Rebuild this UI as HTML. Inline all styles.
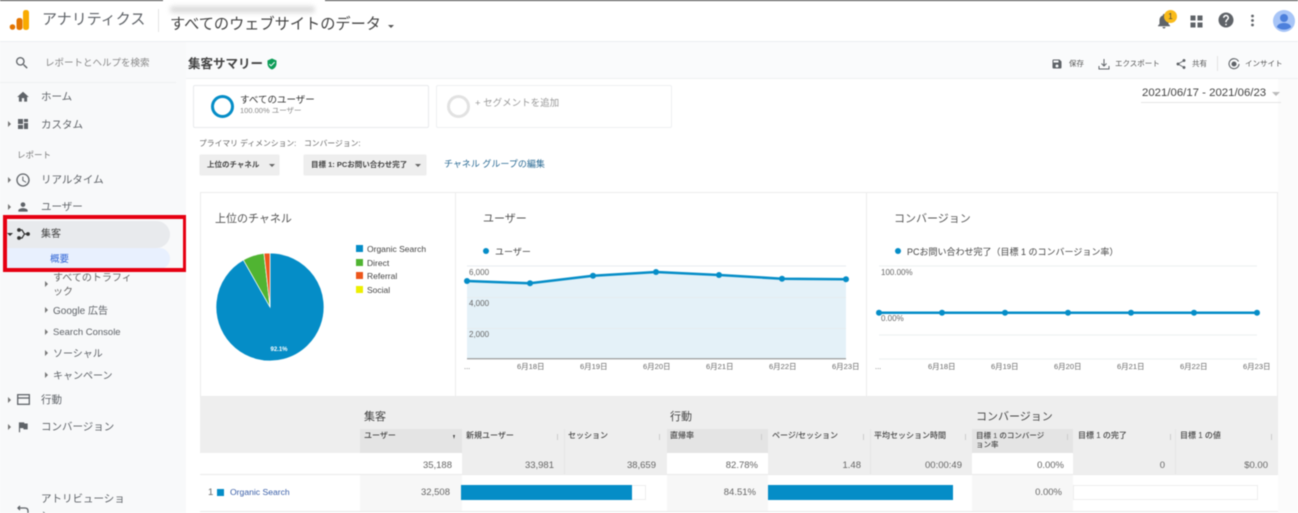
<!DOCTYPE html>
<html lang="ja"><head><meta charset="utf-8"><title>アナリティクス</title>
<style>
html,body{margin:0;padding:0;width:1298px;height:513px;overflow:hidden;background:#fff}
body{position:relative;font-family:"Liberation Sans","Noto Sans CJK JP",sans-serif;color:#555;filter:blur(.4px)}
.a,.t,svg.i{position:absolute}
.t{white-space:nowrap;line-height:1.2}
.r{text-align:right}
.h{font-size:8px;color:#444;font-weight:500}
.n{font-size:9.5px;color:#666}
.x{font-size:7.5px;color:#666}
.s{font-size:10.5px;color:#5f6368}
.tri{position:absolute;width:0;height:0;border-left:3px solid #777;border-top:3px solid transparent;border-bottom:3px solid transparent}
.dn{position:absolute;width:0;height:0;border-top:3px solid #666;border-left:3px solid transparent;border-right:3px solid transparent}
</style></head><body>
<!-- top line -->
<div class="a" style="left:0;top:0;width:163px;height:1px;background:#444"></div>
<div class="a" style="left:325px;top:0;width:973px;height:1px;background:#444"></div>
<div class="a" style="left:170px;top:6px;width:145px;height:7px;background:#ddd;border-radius:3px;filter:blur(2.5px)"></div>
<!-- header -->
<div class="a" style="left:0;top:41px;width:1298px;height:1px;background:#eceef0"></div>
<svg class="i" style="left:9px;top:9px" width="21" height="23" viewBox="0 0 21 23"><rect x="14" y="1" width="6" height="20" rx="2.5" fill="#f9ab00"/><rect x="7.5" y="9" width="6" height="12" rx="2.5" fill="#e37400"/><circle cx="3.5" cy="18" r="2.8" fill="#e37400"/></svg>
<div class="t" style="left:42px;top:11px;font-size:15px;color:#5f6368">アナリティクス</div>
<div class="a" style="left:158px;top:9px;width:1px;height:23px;background:#e3e3e3"></div>
<div class="t" style="left:170px;top:16px;font-size:15.2px;color:#444">すべてのウェブサイトのデータ</div>
<div class="dn" style="left:388px;top:25px;border-top-color:#555"></div>
<svg class="i" style="left:1155px;top:12px" width="18" height="18" viewBox="0 0 24 24" fill="#5f6368"><path d="M12 22c1.1 0 2-.9 2-2h-4c0 1.1.89 2 2 2zm6-6v-5c0-3.07-1.64-5.64-4.5-6.32V4c0-.83-.67-1.5-1.5-1.5s-1.5.67-1.5 1.5v.68C7.63 5.36 6 7.92 6 11v5l-2 2v1h16v-1l-2-2z"/></svg>
<div class="a" style="left:1164px;top:10px;width:13px;height:13px;border-radius:50%;background:#f9bb1a;color:#444;font-size:8px;text-align:center;line-height:13px">1</div>
<svg class="i" style="left:1190px;top:15px" width="13" height="13" viewBox="0 0 13 13" fill="#5f6368"><rect x="0.5" y="0.5" width="5" height="5"/><rect x="7.5" y="0.5" width="5" height="5"/><rect x="0.5" y="7.5" width="5" height="5"/><rect x="7.5" y="7.5" width="5" height="5"/></svg>
<svg class="i" style="left:1217px;top:11px" width="18" height="18" viewBox="0 0 24 24" fill="#5f6368"><path d="M12 2C6.48 2 2 6.48 2 12s4.48 10 10 10 10-4.48 10-10S17.52 2 12 2zm1 17h-2v-2h2v2zm2.07-7.75l-.9.92C13.45 12.9 13 13.5 13 15h-2v-.5c0-1.1.45-2.1 1.17-2.83l1.24-1.26c.37-.36.59-.86.59-1.41 0-1.1-.9-2-2-2s-2 .9-2 2H8c0-2.21 1.79-4 4-4s4 1.79 4 4c0 .88-.36 1.68-.93 2.25z"/></svg>
<svg class="i" style="left:1250px;top:14px" width="5" height="13" viewBox="0 0 5 13" fill="#5f6368"><circle cx="2.5" cy="2" r="1.4"/><circle cx="2.5" cy="6.5" r="1.4"/><circle cx="2.5" cy="11" r="1.4"/></svg>
<svg class="i" style="left:1273px;top:10px" width="22" height="22" viewBox="0 0 22 22"><circle cx="11" cy="11" r="11" fill="#a8c5f7"/><circle cx="11" cy="8" r="4" fill="#4d80dc"/><path d="M3.8 17c1-3 4-4 7.2-4s6.2 1 7.2 4a11 11 0 0 1-14.4 0z" fill="#4d80dc"/></svg>

<!-- sidebar -->
<div class="a" style="left:0;top:42px;width:186px;height:471px;background:#f8f9fa"></div>
<div class="a" style="left:0;top:82px;width:176px;height:1px;background:#eef0f1"></div>
<svg class="i" style="left:14px;top:55px" width="16" height="16" viewBox="0 0 24 24" fill="#5f6368"><path d="M15.5 14h-.79l-.28-.27A6.471 6.471 0 0 0 16 9.5 6.5 6.5 0 1 0 9.5 16c1.61 0 3.09-.59 4.23-1.57l.27.28v.79l5 4.99L20.49 19l-4.99-5zm-6 0C7.01 14 5 11.99 5 9.5S7.01 5 9.5 5 14 7.01 14 9.5 11.99 14 9.5 14z"/></svg>
<div class="t" style="left:45px;top:58px;font-size:9.5px;color:#888">レポートとヘルプを検索</div>
<svg class="i" style="left:16px;top:90px" width="14" height="14" viewBox="0 0 24 24" fill="#5f6368"><path d="M10 20v-6h4v6h5v-8h3L12 3 2 12h3v8z"/></svg>
<div class="t s" style="left:41px;top:91px">ホーム</div>
<div class="tri" style="left:8px;top:121px"></div>
<svg class="i" style="left:17px;top:118px" width="12" height="12" viewBox="0 0 12 12" fill="#5f6368"><rect x="1" y="1" width="5" height="5"/><rect x="7" y="1" width="4" height="3"/><rect x="1" y="7" width="5" height="4"/><rect x="7" y="5" width="4" height="6"/></svg>
<div class="t s" style="left:41px;top:119px">カスタム</div>
<div class="t" style="left:17px;top:150px;font-size:8.5px;color:#777">レポート</div>
<div class="tri" style="left:8px;top:177px"></div>
<svg class="i" style="left:15px;top:172px" width="16" height="16" viewBox="0 0 24 24" fill="#5f6368"><path d="M11.99 2C6.47 2 2 6.48 2 12s4.47 10 9.99 10C17.52 22 22 17.52 22 12S17.52 2 11.99 2zM12 20c-4.42 0-8-3.58-8-8s3.58-8 8-8 8 3.58 8 8-3.58 8-8 8zm.5-13H11v6l5.25 3.15.75-1.23-4.5-2.67z"/></svg>
<div class="t s" style="left:41px;top:174px">リアルタイム</div>
<div class="tri" style="left:8px;top:204px"></div>
<svg class="i" style="left:16px;top:200px" width="14" height="14" viewBox="0 0 24 24" fill="#5f6368"><path d="M12 12c2.21 0 4-1.79 4-4s-1.79-4-4-4-4 1.79-4 4 1.79 4 4 4zm0 2c-2.67 0-8 1.34-8 4v2h16v-2c0-2.66-5.33-4-8-4z"/></svg>
<div class="t s" style="left:41px;top:201px">ユーザー</div>

<div class="a" style="left:4px;top:221px;width:166px;height:27px;background:#e8eaed;border-radius:0 14px 14px 0"></div>
<div class="a" style="left:4px;top:248px;width:166px;height:21px;background:#e8f0fe;border-radius:0 11px 11px 0"></div>
<div class="dn" style="left:7px;top:233px;border-top-color:#333"></div>
<svg class="i" style="left:17px;top:228px" width="13" height="12" viewBox="0 0 13 12" fill="none" stroke="#333" stroke-width="1.2"><path d="M2 2h3l2.5 4L5 10H2M7.5 6H11"/><circle cx="2" cy="2" r="1.3" fill="#333"/><circle cx="2" cy="10" r="1.3" fill="#333"/><circle cx="11" cy="6" r="1.3" fill="#333"/></svg>
<div class="t" style="left:41px;top:229px;font-size:10px;color:#444">集客</div>
<div class="t" style="left:50px;top:254px;font-size:9.5px;color:#3367d6">概要</div>
<div class="a" style="left:3px;top:215px;width:176px;height:49px;border:4px solid #e60012"></div>

<div class="tri" style="left:45px;top:281px"></div>
<div class="t" style="left:53px;top:272px;font-size:10px;color:#666;line-height:14px;white-space:normal;width:82px;height:26px">すべてのトラフィック</div>
<div class="tri" style="left:45px;top:307px"></div>
<div class="t" style="left:53px;top:306px;font-size:10px;color:#5f6368">Google 広告</div>
<div class="tri" style="left:45px;top:329px"></div>
<div class="t" style="left:53px;top:327px;font-size:9.5px;color:#5f6368">Search Console</div>
<div class="tri" style="left:45px;top:350px"></div>
<div class="t" style="left:53px;top:349px;font-size:10px;color:#5f6368">ソーシャル</div>
<div class="tri" style="left:45px;top:372px"></div>
<div class="t" style="left:53px;top:371px;font-size:10px;color:#5f6368">キャンペーン</div>
<div class="tri" style="left:8px;top:397px"></div>
<svg class="i" style="left:17px;top:394px" width="13" height="11" viewBox="0 0 13 11" fill="none" stroke="#5f6368" stroke-width="1.3"><rect x=".7" y=".7" width="11.6" height="9.6"/><path d="M.7 4h11.6"/></svg>
<div class="t s" style="left:41px;top:394px">行動</div>
<div class="tri" style="left:8px;top:424px"></div>
<svg class="i" style="left:16px;top:420px" width="14" height="14" viewBox="0 0 24 24" fill="#5f6368"><path d="M14.4 6L14 4H5v17h2v-7h5.6l.4 2h7V6z"/></svg>
<div class="t s" style="left:41px;top:421px">コンバージョン</div>
<div class="t s" style="left:41px;top:491px;width:86px;white-space:normal;line-height:17px;height:22px;overflow:hidden">アトリビューション</div>
<svg class="i" style="left:17px;top:505px" width="12" height="8" viewBox="0 0 12 8" fill="none" stroke="#5f6368" stroke-width="1.3"><path d="M1 3h7c2 0 3 1 3 3v2M3 1L1 3l2 2"/></svg>

<!-- title bar -->
<div class="a" style="left:186px;top:42px;width:1112px;height:36px;background:#fafbfc"></div>
<div class="a" style="left:186px;top:78px;width:1112px;height:1px;background:#eef0f2"></div>
<div class="a" style="left:186px;top:79px;width:1112px;height:434px;background:#fff"></div>
<div class="a" style="left:1278px;top:79px;width:20px;height:434px;background:#fbfbfb"></div>
<div class="t" style="left:188px;top:57px;font-size:12.5px;font-weight:700;color:#444">集客サマリー</div>
<svg class="i" style="left:266px;top:58px" width="12" height="12" viewBox="0 0 24 24" fill="#0d9d58"><path d="M12 1L3 5v6c0 5.55 3.84 10.74 9 12 5.16-1.26 9-6.45 9-12V5l-9-4zm-2 16l-4-4 1.41-1.41L10 14.17l6.59-6.59L18 9l-8 8z"/></svg>
<svg class="i" style="left:1051px;top:58px" width="12" height="12" viewBox="0 0 24 24" fill="#5f6368"><path d="M17 3H5c-1.11 0-2 .9-2 2v14c0 1.1.89 2 2 2h14c1.1 0 2-.9 2-2V7l-4-4zm-5 16c-1.66 0-3-1.34-3-3s1.34-3 3-3 3 1.34 3 3-1.34 3-3 3zm3-10H5V5h10v4z"/></svg>
<div class="t" style="left:1069px;top:59px;font-size:7.5px;color:#555">保存</div>
<svg class="i" style="left:1098px;top:58px" width="12" height="12" viewBox="0 0 12 12" fill="none" stroke="#5f6368"><path d="M6 1v7M3.5 5.5L6 8l2.5-2.5M1 8v3h10V8"/></svg>
<div class="t" style="left:1115px;top:59px;font-size:7.5px;color:#555">エクスポート</div>
<svg class="i" style="left:1175px;top:58px" width="12" height="12" viewBox="0 0 24 24" fill="#5f6368"><path d="M18 16.08c-.76 0-1.44.3-1.96.77L8.91 12.7c.05-.23.09-.46.09-.7s-.04-.47-.09-.7l7.05-4.11c.54.5 1.25.81 2.04.81 1.66 0 3-1.34 3-3s-1.34-3-3-3-3 1.34-3 3c0 .24.04.47.09.7L8.04 9.81C7.5 9.31 6.79 9 6 9c-1.66 0-3 1.34-3 3s1.34 3 3 3c.79 0 1.5-.31 2.04-.81l7.12 4.16c-.05.21-.08.43-.08.65 0 1.61 1.31 2.92 2.92 2.92 1.61 0 2.92-1.31 2.92-2.92s-1.31-2.92-2.92-2.92z"/></svg>
<div class="t" style="left:1192px;top:59px;font-size:7.5px;color:#555">共有</div>
<div class="a" style="left:1217px;top:56px;width:1px;height:15px;background:#e3e3e3"></div>
<svg class="i" style="left:1228px;top:58px" width="12" height="12" viewBox="0 0 12 12" fill="none" stroke="#5f6368" stroke-width="1.1"><path d="M10.5 3.5A5 5 0 1 0 11 6"/><circle cx="6" cy="6" r="2" fill="#5f6368"/></svg>
<div class="t" style="left:1245px;top:59px;font-size:7.5px;color:#555">インサイト</div>

<!-- date -->
<div class="t" style="left:1142px;top:87px;font-size:11.4px;color:#444">2021/06/17 - 2021/06/23</div>
<div class="dn" style="left:1272px;top:92px;border-top:4px solid #bbb;border-left-width:4px;border-right-width:4px"></div>
<div class="a" style="left:1141px;top:102px;width:140px;height:1px;background:#e5e5e5"></div>

<!-- segments -->
<div class="a" style="left:193px;top:85px;width:234px;height:41px;border:1px solid #e8eaed;border-radius:2px;background:#fff"></div>
<div class="a" style="left:211px;top:95px;width:23px;height:23px;box-sizing:border-box;border:3.5px solid #058dc7;border-radius:50%"></div>
<div class="t" style="left:240px;top:95px;font-size:9.5px;color:#333">すべてのユーザー</div>
<div class="t" style="left:240px;top:106px;font-size:7.5px;color:#888">100.00% ユーザー</div>
<div class="a" style="left:436px;top:85px;width:234px;height:41px;border:1px solid #eeeff1;border-radius:2px;background:#fff"></div>
<div class="a" style="left:447px;top:95px;width:23px;height:23px;box-sizing:border-box;border:3px solid #e2e2e2;border-radius:50%"></div>
<div class="t" style="left:475px;top:98px;font-size:9.5px;color:#999">+ セグメントを追加</div>

<!-- dims -->
<div class="t" style="left:199px;top:139px;font-size:7.8px;color:#666">プライマリ ディメンション:</div>
<div class="t" style="left:304px;top:139px;font-size:7.8px;color:#666">コンバージョン:</div>
<div class="a" style="left:200px;top:155px;width:79px;height:20px;background:#eee;box-shadow:0 0 1px #ccc"></div>
<div class="t" style="left:207px;top:160px;font-size:7.5px;font-weight:700;color:#444">上位のチャネル</div>
<div class="dn" style="left:269px;top:164px"></div>
<div class="a" style="left:304px;top:155px;width:122px;height:20px;background:#eee;box-shadow:0 0 1px #ccc"></div>
<div class="t" style="left:311px;top:160px;font-size:7.5px;font-weight:700;color:#444">目標 1: PCお問い合わせ完了</div>
<div class="dn" style="left:415px;top:164px"></div>
<div class="t" style="left:444px;top:159px;font-size:9px;color:#2a6a94">チャネル グループの編集</div>

<!-- chart panel -->
<div class="a" style="left:200px;top:192px;width:1078px;height:205px;box-sizing:border-box;border:1px solid #ececec;background:#fff"></div>
<div class="a" style="left:455px;top:192px;width:1px;height:205px;background:#ececec"></div>
<div class="a" style="left:866px;top:192px;width:1px;height:205px;background:#ececec"></div>
<div class="t" style="left:215px;top:213px;font-size:11px;color:#555">上位のチャネル</div>
<div class="t" style="left:483px;top:213px;font-size:11px;color:#555">ユーザー</div>
<div class="t" style="left:894px;top:213px;font-size:11px;color:#555">コンバージョン</div>

<svg class="a" style="left:210px;top:245px" width="125" height="125" viewBox="210 245 125 125">
<path d="M270 307V253A54 54 0 1 1 243.4 260Z" fill="#058dc7" stroke="#fff" stroke-width=".7"/>
<path d="M270 307L243.4 260A54 54 0 0 1 264 253.3Z" fill="#50b432" stroke="#fff" stroke-width=".7"/>
<path d="M270 307L264 253.3A54 54 0 0 1 270 253Z" fill="#ed561b" stroke="#fff" stroke-width=".7"/>
<text x="279" y="351" font-size="6" font-weight="700" fill="#fff" text-anchor="middle" font-family="Liberation Sans">92.1%</text>
</svg>
<div class="a" style="left:356px;top:245px;width:7px;height:7px;background:#058dc7"></div>
<div class="t" style="left:367px;top:244px;font-size:8.5px;color:#444">Organic Search</div>
<div class="a" style="left:356px;top:259px;width:7px;height:7px;background:#50b432"></div>
<div class="t" style="left:367px;top:258px;font-size:8.5px;color:#444">Direct</div>
<div class="a" style="left:356px;top:272px;width:7px;height:7px;background:#ed561b"></div>
<div class="t" style="left:367px;top:271px;font-size:8.5px;color:#444">Referral</div>
<div class="a" style="left:356px;top:286px;width:7px;height:7px;background:#edef00"></div>
<div class="t" style="left:367px;top:285px;font-size:8.5px;color:#444">Social</div>

<!-- users chart -->
<svg class="a" style="left:456px;top:240px" width="410" height="130" viewBox="456 240 410 130">
<path d="M467 281L530 283.3L593 275.7L656 272L719 275L782 278.7L846 279.3V358.5H467Z" fill="#e4f1f8"/>
<path d="M467 266H846M467 297.5H846M467 328.5H846" stroke="#e6ecef" stroke-width="1"/>
<path d="M467 358.7H846" stroke="#888" stroke-width="1"/>
<path d="M467 281L530 283.3L593 275.7L656 272L719 275L782 278.7L846 279.3" fill="none" stroke="#058dc7" stroke-width="2.5"/>
<g fill="#058dc7"><circle cx="467" cy="281" r="3"/><circle cx="530" cy="283.3" r="3"/><circle cx="593" cy="275.7" r="3"/><circle cx="656" cy="272" r="3"/><circle cx="719" cy="275" r="3"/><circle cx="782" cy="278.7" r="3"/><circle cx="846" cy="279.3" r="3"/><circle cx="486" cy="251" r="3"/></g>
</svg>
<div class="t" style="left:495px;top:247px;font-size:9px;color:#444">ユーザー</div>
<div class="t x" style="left:469px;top:268px;font-size:8px">6,000</div>
<div class="t x" style="left:469px;top:299px;font-size:8px">4,000</div>
<div class="t x" style="left:469px;top:330px;font-size:8px">2,000</div>
<div class="t x" style="left:464px;top:362px">...</div>
<div class="t x" style="left:517px;top:362px">6月18日</div>
<div class="t x" style="left:580px;top:362px">6月19日</div>
<div class="t x" style="left:643px;top:362px">6月20日</div>
<div class="t x" style="left:706px;top:362px">6月21日</div>
<div class="t x" style="left:769px;top:362px">6月22日</div>
<div class="t x" style="left:832px;top:362px">6月23日</div>

<!-- conv chart -->
<svg class="a" style="left:867px;top:240px" width="410" height="130" viewBox="867 240 410 130">
<path d="M879 266H1257M879 335H1257M879 359H1257" stroke="#eceff1" stroke-width="1"/>
<path d="M879 312.7H1257" stroke="#058dc7" stroke-width="2.5"/>
<g fill="#058dc7"><circle cx="879" cy="312.7" r="3"/><circle cx="942" cy="312.7" r="3"/><circle cx="1005" cy="312.7" r="3"/><circle cx="1068" cy="312.7" r="3"/><circle cx="1131" cy="312.7" r="3"/><circle cx="1194" cy="312.7" r="3"/><circle cx="1257" cy="312.7" r="3"/><circle cx="898" cy="251" r="3"/></g>
</svg>
<div class="t" style="left:907px;top:247px;font-size:9px;color:#444">PCお問い合わせ完了（目標 1 のコンバージョン率）</div>
<div class="t x" style="left:881px;top:268px;font-size:8px">100.00%</div>
<div class="t x" style="left:881px;top:314px;font-size:8px">0.00%</div>
<div class="t x" style="left:875px;top:362px">...</div>
<div class="t x" style="left:928px;top:362px">6月18日</div>
<div class="t x" style="left:991px;top:362px">6月19日</div>
<div class="t x" style="left:1054px;top:362px">6月20日</div>
<div class="t x" style="left:1117px;top:362px">6月21日</div>
<div class="t x" style="left:1180px;top:362px">6月22日</div>
<div class="t x" style="left:1243px;top:362px">6月23日</div>

<!-- table -->
<div class="a" style="left:200px;top:397px;width:1078px;height:56px;background:#eee"></div>
<div class="a" style="left:360px;top:429px;width:102px;height:24px;background:#e4e4e4"></div>
<div class="a" style="left:667px;top:429px;width:101px;height:24px;background:#e4e4e4"></div>
<div class="a" style="left:972px;top:429px;width:101px;height:24px;background:#e4e4e4"></div>
<div class="a" style="left:200px;top:453px;width:1078px;height:21px;background:#fff"></div>
<div class="a" style="left:462px;top:453px;width:205px;height:21px;background:#eee"></div>
<div class="a" style="left:768px;top:453px;width:204px;height:21px;background:#eee"></div>
<div class="a" style="left:1073px;top:453px;width:205px;height:21px;background:#eee"></div>
<div class="a" style="left:360px;top:474px;width:102px;height:37px;background:#f7f7f7"></div>
<div class="a" style="left:667px;top:474px;width:101px;height:37px;background:#f7f7f7"></div>
<div class="a" style="left:972px;top:474px;width:101px;height:37px;background:#f7f7f7"></div>
<div class="a" style="left:200px;top:474px;width:1078px;height:1px;background:#eaeaea"></div>
<div class="a" style="left:200px;top:511px;width:1078px;height:1px;background:#eaeaea"></div>
<div class="a" style="left:564px;top:429px;width:1px;height:45px;background:#e6e6e6"></div>
<div class="a" style="left:870px;top:429px;width:1px;height:45px;background:#e6e6e6"></div>
<div class="a" style="left:1175px;top:429px;width:1px;height:45px;background:#e6e6e6"></div>
<div class="t" style="left:364px;top:411px;font-size:11px;color:#444">集客</div>
<div class="t" style="left:670px;top:411px;font-size:11px;color:#444">行動</div>
<div class="t" style="left:976px;top:411px;font-size:11px;color:#444">コンバージョン</div>
<div class="t h" style="left:364px;top:431px">ユーザー</div>
<div class="t h" style="left:466px;top:431px">新規ユーザー</div>
<div class="t h" style="left:568px;top:431px">セッション</div>
<div class="t h" style="left:670px;top:431px">直帰率</div>
<div class="t h" style="left:772px;top:431px">ページ/セッション</div>
<div class="t h" style="left:874px;top:431px">平均セッション時間</div>
<div class="t h" style="left:976px;top:431px;width:70px;white-space:normal;line-height:9px;font-size:7.5px">目標 1 のコンバージョン率</div>
<div class="t h" style="left:1078px;top:431px">目標 1 の完了</div>
<div class="t h" style="left:1180px;top:431px">目標 1 の値</div>
<div class="a" style="left:453px;top:435px;width:0;height:0;border-top:4px solid #444;border-left:1.5px solid transparent;border-right:1.5px solid transparent"></div>
<div class="a" style="left:557px;top:434px;width:1px;height:6px;background:#ccc"></div>
<div class="a" style="left:659px;top:434px;width:1px;height:6px;background:#ccc"></div>
<div class="a" style="left:761px;top:434px;width:1px;height:6px;background:#ccc"></div>
<div class="a" style="left:863px;top:434px;width:1px;height:6px;background:#ccc"></div>
<div class="a" style="left:965px;top:434px;width:1px;height:6px;background:#ccc"></div>
<div class="a" style="left:1067px;top:434px;width:1px;height:6px;background:#ccc"></div>
<div class="a" style="left:1170px;top:434px;width:1px;height:6px;background:#ccc"></div>
<div class="a" style="left:1271px;top:434px;width:1px;height:6px;background:#ccc"></div>

<div class="t n r" style="left:400px;width:52px;top:460px">35,188</div>
<div class="t n r" style="left:500px;width:54px;top:460px">33,981</div>
<div class="t n r" style="left:600px;width:56px;top:460px">38,659</div>
<div class="t n r" style="left:700px;width:58px;top:460px">82.78%</div>
<div class="t n r" style="left:800px;width:61px;top:460px">1.48</div>
<div class="t n r" style="left:900px;width:62px;top:460px">00:00:49</div>
<div class="t n r" style="left:1010px;width:54px;top:460px">0.00%</div>
<div class="t n r" style="left:1110px;width:55px;top:460px">0</div>
<div class="t n r" style="left:1210px;width:58px;top:460px">$0.00</div>

<div class="t n" style="left:208px;top:487px">1</div>
<div class="a" style="left:217px;top:489px;width:7px;height:7px;background:#058dc7"></div>
<div class="t" style="left:230px;top:487px;font-size:8.6px;color:#3a5fa8">Organic Search</div>
<div class="t n r" style="left:400px;width:50px;top:487px">32,508</div>
<div class="a" style="left:461px;top:485px;width:185px;height:15px;box-sizing:border-box;border:1px solid #eee;background:#fff"></div>
<div class="a" style="left:461px;top:485px;width:171px;height:15px;background:#058dc7"></div>
<div class="t n r" style="left:700px;width:56px;top:487px">84.51%</div>
<div class="a" style="left:768px;top:485px;width:185px;height:15px;background:#058dc7"></div>
<div class="t n r" style="left:1010px;width:52px;top:487px">0.00%</div>
<div class="a" style="left:1073px;top:485px;width:185px;height:15px;box-sizing:border-box;border:1px solid #eee;background:#fff"></div>
</body></html>
